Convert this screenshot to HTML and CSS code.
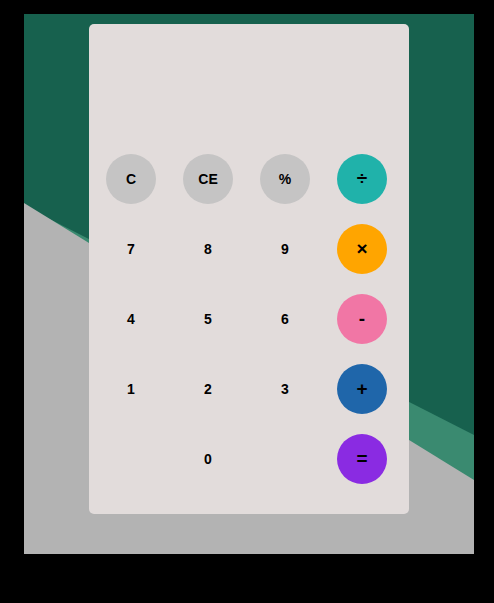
FILE: index.html
```html
<!DOCTYPE html>
<html lang="en">
<head>
<meta charset="utf-8">
<title>Calculator</title>
<link rel="stylesheet" href="styles.css">
</head>
<body>
<div class="stage">
  <div class="calculator">
    <div class="display"></div>
    <div class="keys">
      <button class="key key-fn">C</button>
      <button class="key key-fn">CE</button>
      <button class="key key-fn">%</button>
      <button class="key key-op op-div">÷</button>

      <button class="key">7</button>
      <button class="key">8</button>
      <button class="key">9</button>
      <button class="key key-op op-mul">×</button>

      <button class="key">4</button>
      <button class="key">5</button>
      <button class="key">6</button>
      <button class="key key-op op-sub">-</button>

      <button class="key">1</button>
      <button class="key">2</button>
      <button class="key">3</button>
      <button class="key key-op op-add">+</button>

      <span class="key key-empty"></span>
      <button class="key">0</button>
      <span class="key key-empty"></span>
      <button class="key key-op op-eq">=</button>
    </div>
  </div>
</div>
</body>
</html>
```

FILE: styles.css
```css
html, body {
  margin: 0;
  padding: 0;
  background: #000;
}

body {
  font-family: "Liberation Sans", Arial, sans-serif;
  padding: 14px 0 0 24px;
}

.stage {
  position: relative;
  width: 450px;
  height: 540px;
  overflow: hidden;
  background: #17614e;
  padding: 10px 0 0 65px;
  box-sizing: border-box;
}

.stage::before,
.stage::after {
  content: "";
  position: absolute;
  inset: 0;
}

.stage::before {
  background: #3a8a70;
  clip-path: polygon(0 192px, 450px 421px, 450px 540px, 0 540px);
}

.stage::after {
  background: #b3b3b3;
  clip-path: polygon(0 189px, 450px 466px, 450px 540px, 0 540px);
}

.calculator {
  position: relative;
  z-index: 1;
  width: 320px;
  height: 490px;
  box-sizing: border-box;
  background: #e2dcdb;
  border-radius: 5px;
  padding: 0 22px 0 17px;
  display: flex;
  flex-direction: column;
}

.display {
  height: 130px;
  flex: none;
}

.keys {
  display: grid;
  grid-template-columns: repeat(4, 50px);
  grid-auto-rows: 50px;
  column-gap: 27px;
  row-gap: 20px;
}

.key {
  width: 50px;
  height: 50px;
  border: none;
  border-radius: 50%;
  background: transparent;
  padding: 0;
  margin: 0;
  display: flex;
  align-items: center;
  justify-content: center;
  font-family: "Liberation Sans", Arial, sans-serif;
  font-weight: bold;
  font-size: 14px;
  color: #000;
}

.key-fn {
  background: #c5c4c4;
}

.key-op {
  font-size: 19px;
}

.op-div { background: #20b2aa; }
.op-mul { background: #ffa500; }
.op-sub { background: #f176a5; }
.op-add { background: #1f66aa; }
.op-eq  { background: #8a2be2; }
```
